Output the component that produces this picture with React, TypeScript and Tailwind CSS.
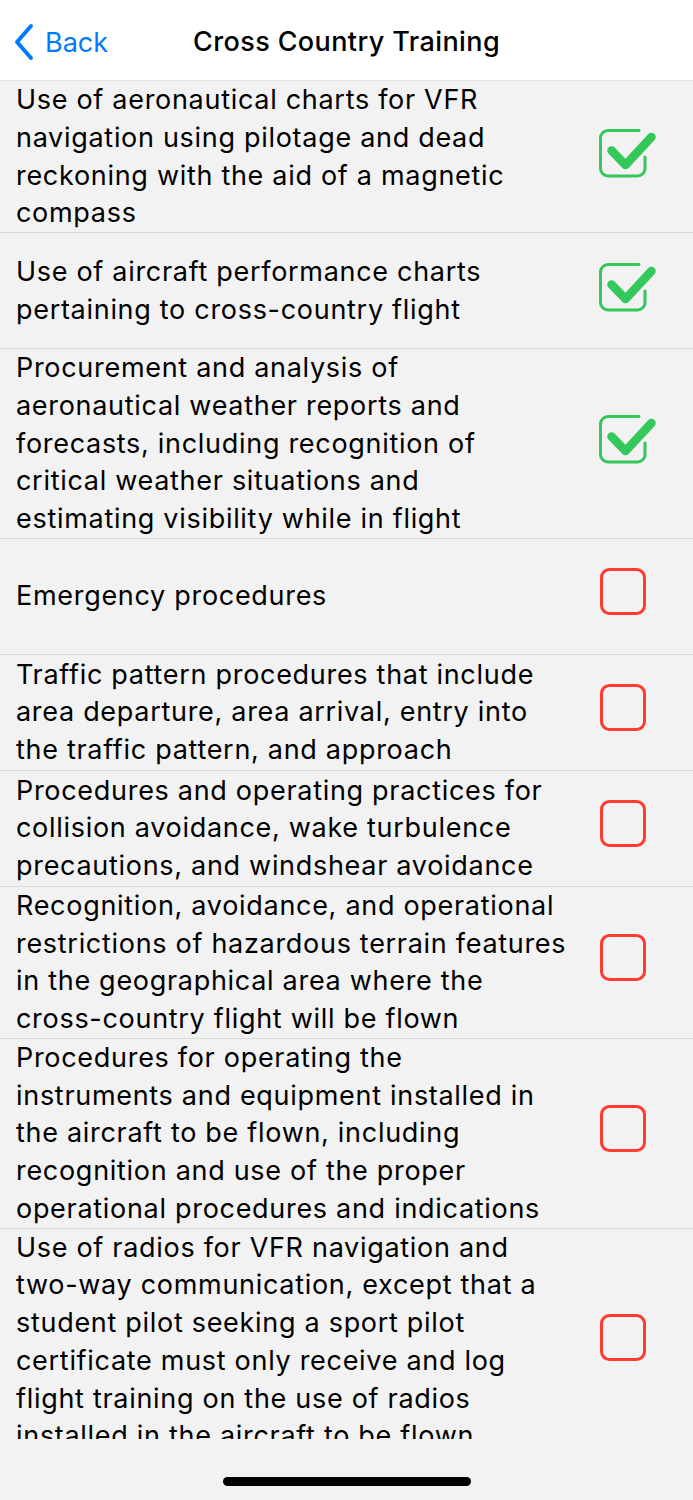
import React from "react";

type Task = {
  id: number;
  lines: string[];
  done: boolean;
};

const tasks: Task[] = [
  {
    id: 1,
    lines: [
      "Use of aeronautical charts for VFR",
      "navigation using pilotage and dead",
      "reckoning with the aid of a magnetic",
      "compass",
    ],
    done: true,
  },
  {
    id: 2,
    lines: ["Use of aircraft performance charts", "pertaining to cross-country flight"],
    done: true,
  },
  {
    id: 3,
    lines: [
      "Procurement and analysis of",
      "aeronautical weather reports and",
      "forecasts, including recognition of",
      "critical weather situations and",
      "estimating visibility while in flight",
    ],
    done: true,
  },
  { id: 4, lines: ["Emergency procedures"], done: false },
  {
    id: 5,
    lines: [
      "Traffic pattern procedures that include",
      "area departure, area arrival, entry into",
      "the traffic pattern, and approach",
    ],
    done: false,
  },
  {
    id: 6,
    lines: [
      "Procedures and operating practices for",
      "collision avoidance, wake turbulence",
      "precautions, and windshear avoidance",
    ],
    done: false,
  },
  {
    id: 7,
    lines: [
      "Recognition, avoidance, and operational",
      "restrictions of hazardous terrain features",
      "in the geographical area where the",
      "cross-country flight will be flown",
    ],
    done: false,
  },
  {
    id: 8,
    lines: [
      "Procedures for operating the",
      "instruments and equipment installed in",
      "the aircraft to be flown, including",
      "recognition and use of the proper",
      "operational procedures and indications",
    ],
    done: false,
  },
  {
    id: 9,
    lines: [
      "Use of radios for VFR navigation and",
      "two-way communication, except that a",
      "student pilot seeking a sport pilot",
      "certificate must only receive and log",
      "flight training on the use of radios",
      "installed in the aircraft to be flown",
    ],
    done: false,
  },
];

const CheckedBox = () => (
  <svg width="60" height="54" viewBox="0 0 60 54" fill="none">
    <path
      d="M41 4.5 H10 a7.5 7.5 0 0 0 -7.5 7.5 V42.5 a7.5 7.5 0 0 0 7.5 7.5 H39.5 a7.5 7.5 0 0 0 7.5 -7.5 V31"
      stroke="#34c759"
      strokeWidth="3"
      strokeLinecap="round"
    />
    <path
      d="M13.5 24.5 L27.5 39 L53.5 11"
      stroke="#34c759"
      strokeWidth="8.5"
      strokeLinecap="round"
      strokeLinejoin="round"
    />
  </svg>
);

const EmptyBox = () => (
  <svg width="60" height="54" viewBox="0 0 60 54" fill="none">
    <rect x="3.5" y="4.5" width="43" height="44" rx="8" stroke="#ff3b30" strokeWidth="3" />
  </svg>
);

const App = () => {
  return (
    <div className="flex h-[1500px] w-[693px] flex-col bg-[#f2f2f2] font-['Inter',sans-serif] text-black">
      <header className="relative flex h-[81px] shrink-0 items-center justify-center border-b border-[#e2e2e2] bg-white">
        <div className="absolute left-[13px] top-[23px] flex items-center gap-[10px] text-[#007aff]">
          <svg width="22" height="38" viewBox="0 0 22 38" fill="none">
            <path
              d="M18 3 L4 19 L18 35"
              stroke="#007aff"
              strokeWidth="4"
              strokeLinecap="round"
              strokeLinejoin="round"
            />
          </svg>
          <span className="text-[27px] leading-none">Back</span>
        </div>
        <h1 className="pt-[2px] text-[27px] font-medium leading-none tracking-[0.4px]">
          Cross Country Training
        </h1>
      </header>

      <div className="flex-1 overflow-hidden">
        {tasks.map((task) => (
          <div
            key={task.id}
            className="flex min-h-[116px] items-center border-b border-[#d3dfd3] pl-4 pr-[35px]"
          >
            <div className="flex-1 text-[27px] leading-[37.75px] tracking-[0.7px]">
              {task.lines.map((line) => (
                <p key={line} className="whitespace-nowrap">
                  {line}
                </p>
              ))}
            </div>
            <div className="mb-2 shrink-0">{task.done ? <CheckedBox /> : <EmptyBox />}</div>
          </div>
        ))}
      </div>

      <div className="flex h-[61px] shrink-0 justify-center pt-[38px]">
        <div className="h-[9px] w-[248px] rounded-full bg-black" />
      </div>
    </div>
  );
};

export default App;
